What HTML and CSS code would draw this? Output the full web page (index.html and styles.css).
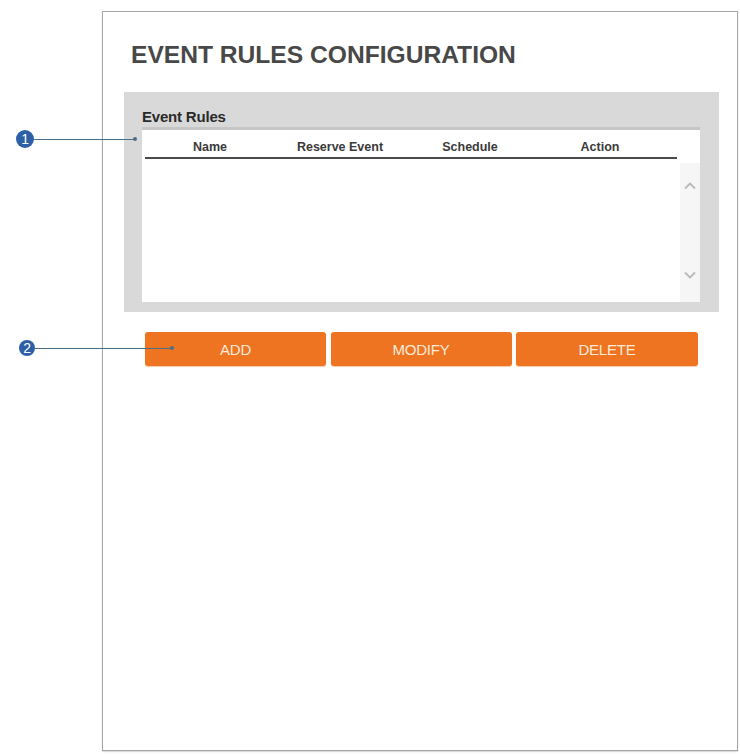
FILE: index.html
```html
<!DOCTYPE html>
<html>
<head>
<meta charset="utf-8">
<link rel="stylesheet" href="styles.css">
</head>
<body>
<div class="frame">
  <h1 class="title">EVENT RULES CONFIGURATION</h1>
  <section class="panel">
    <div class="panel-label">Event Rules</div>
    <div class="list">
      <div class="list-main">
        <div class="list-head">
          <span>Name</span>
          <span>Reserve Event</span>
          <span>Schedule</span>
          <span>Action</span>
        </div>
      </div>
      <div class="scrollbar">
        <svg class="arrow" width="14" height="9" viewBox="0 0 14 9"><path d="M2 7.5 L7 2.5 L12 7.5" fill="none" stroke="#b8b8b8" stroke-width="1.8"/></svg>
        <svg class="arrow" width="14" height="9" viewBox="0 0 14 9"><path d="M2 1.5 L7 6.5 L12 1.5" fill="none" stroke="#b8b8b8" stroke-width="1.8"/></svg>
      </div>
    </div>
  </section>
  <div class="buttons">
    <button class="btn">ADD</button>
    <button class="btn">MODIFY</button>
    <button class="btn">DELETE</button>
  </div>
</div>

<div class="callout c1">
  <span class="badge">1</span>
  <span class="leader l1"></span>
  <span class="dot"></span>
</div>
<div class="callout c2">
  <span class="badge">2</span>
  <span class="leader l2"></span>
  <span class="dot"></span>
</div>
</body>
</html>
```

FILE: styles.css
```css
html, body {
  margin: 0;
  padding: 0;
  background: #ffffff;
}
body {
  position: relative;
  width: 740px;
  height: 754px;
  overflow: hidden;
  font-family: "Liberation Sans", Arial, sans-serif;
}
.frame {
  box-sizing: border-box;
  margin: 11px 0 0 102px;
  width: 636px;
  height: 740px;
  border: 1px solid #a6a6a6;
  box-shadow: 0 1px 1px #dcdcdc;
  padding: 0 0 0 21px;
}
.title {
  margin: 29px 0 0 7px;
  font-size: 24.6px;
  line-height: 28px;
  font-weight: bold;
  color: #484848;
  letter-spacing: 0;
}
.panel {
  box-sizing: border-box;
  margin-top: 23px;
  width: 595px;
  height: 220px;
  background: #d9d9d9;
  padding: 0 19px 10px 18px;
  display: flex;
  flex-direction: column;
}
.panel-label {
  height: 35px;
  box-sizing: border-box;
  padding-top: 17px;
  font-size: 15px;
  line-height: 16px;
  font-weight: bold;
  color: #2a2a2a;
  letter-spacing: -0.2px;
}
.list {
  flex: 1;
  background: #ffffff;
  border-top: 3px solid #c6c6c6;
  display: flex;
}
.list-main {
  flex: 1;
  padding: 0 0 0 3px;
}
.list-head {
  display: grid;
  grid-template-columns: repeat(4, 130px) 1fr;
  width: 532px;
  height: 29px;
  box-sizing: border-box;
  border-bottom: 2px solid #4a4a4a;
  font-size: 12.5px;
  line-height: 13px;
  font-weight: bold;
  color: #3a3a3a;
  align-items: end;
  padding-bottom: 3px;
}
.list-head span {
  text-align: center;
}
.scrollbar {
  width: 20px;
  margin-top: 33px;
  background: #f6f6f6;
  display: flex;
  flex-direction: column;
  align-items: center;
  justify-content: space-between;
  padding: 18px 0 22px;
}
.arrow {
  display: block;
}
.buttons {
  margin: 20px 0 0 21px;
  width: 553px;
  display: grid;
  grid-template-columns: 181px 181px 182px;
  column-gap: 4.5px;
}
.btn {
  height: 34px;
  border: none;
  border-radius: 3px;
  background: #ee7422;
  color: #fdebd8;
  font-family: "Liberation Sans", Arial, sans-serif;
  font-size: 15px;
  letter-spacing: -0.2px;
  padding: 0;
  box-shadow: 0 1px 1px #f3c9a8;
}
.callout {
  position: absolute;
  display: flex;
  align-items: center;
}
.c1 { left: 16px; top: 130px; }
.c2 { left: 19px; top: 340px; }
.badge {
  width: 18px;
  height: 18px;
  border-radius: 50%;
  background: #2c5fa6;
  color: #ffffff;
  font-size: 14px;
  line-height: 18px;
  text-align: center;
  font-family: "Liberation Sans", Arial, sans-serif;
  letter-spacing: -0.5px;
}
.c2 .badge {
  width: 16px;
  height: 16px;
  line-height: 16px;
}
.leader {
  height: 1px;
  background: #4d6e88;
}
.l1 { width: 101px; }
.l2 { width: 137px; }
.dot {
  width: 4px;
  height: 4px;
  border-radius: 50%;
  background: #4d6e88;
  margin-left: -2px;
}
```
